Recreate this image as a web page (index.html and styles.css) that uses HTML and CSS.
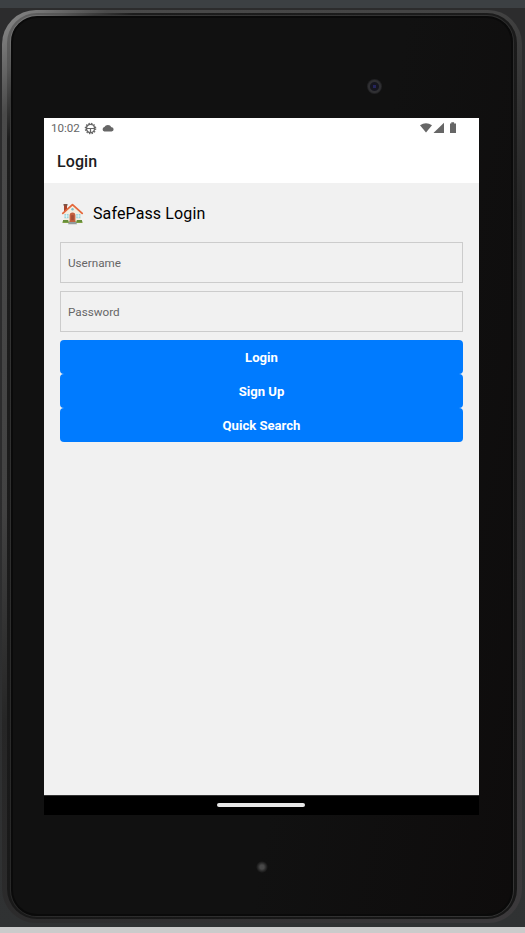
FILE: index.html
```html
<!DOCTYPE html>
<html lang="en">
<head>
<meta charset="utf-8">
<title>SafePass Login</title>
<link rel="stylesheet" href="styles.css">
</head>
<body>
<div class="stage">
  <div class="rim"><div class="groove"><div class="ridge"><div class="device">
    <span class="camera"></span>
    <main class="screen">
      <header class="header">
        <div class="status">
          <span class="clock">10:02</span>
          <svg class="gear" width="13" height="13" viewBox="0 0 13 13" fill="none" stroke="#666">
            <circle cx="6.5" cy="6.5" r="4.1" stroke-width="1.4"/>
            <circle cx="6.5" cy="6.5" r="5.2" stroke-width="1.2" stroke-dasharray="1.4 1.32"/>
            <path d="M2.3 6.5h8.4M6.5 6.5v4.2" stroke-width="1.2"/>
          </svg>
          <svg class="cloud" width="12" height="8" viewBox="0 0 12 8" fill="#666"><path d="M2.3 7.4a2.2 2.2 0 0 1 .1-4.3A3.9 3.9 0 0 1 9.4 3.2a2.1 2.1 0 0 1 .2 4.2z"/></svg>
          <span class="grow"></span>
          <svg width="37" height="12" viewBox="0 0 37 12" fill="#666">
            <path d="M0 3.3Q6 -1 12 3.3L6 10.6z"/>
            <path d="M13.7 11V10.7L24 .8V11z"/>
            <path d="M30 1.4h1.3V.3h2.8v1.1H36V11h-6z"/>
          </svg>
        </div>
        <h1 class="title">Login</h1>
      </header>
      <section class="content">
        <div class="brand">
          <svg width="23" height="22" viewBox="0 0 23 22">
            <path d="M3 2h3v7H3z" fill="#a9442b"/><path d="M2.5 1h4v1.6h-4z" fill="#795548"/>
            <path d="M3 9.5 11.5 2 20 9.5V19H3z" fill="#f4eee0"/>
            <path d="M1.5 18.4h20v1.6h-20z" fill="#7f9f42"/><path d="M2 17h5.3v2H2zM15.7 17H21v2h-5.3z" fill="#668e3b"/>
            <path d="M3.4 11h4.2v4.2H3.4zM15.2 11h4.2v4.2h-4.2z" fill="#9bd4dc"/>
            <path d="M5.5 11v4.2M17.3 11v4.2M3.4 13h4.2M15.2 13h4.2" stroke="#fff" stroke-width=".6"/>
            <path d="M8.6 19v-6.5a2.9 2.9 0 0 1 5.8 0V19z" fill="#c4603f"/>
            <path d="M10.2 12.2h2.6v5h-2.6z" fill="#a44c34"/>
            <path d="M8 19h7l1 2.2H7z" fill="#929a9c"/>
            <path d="M1.8 10.4 11.5 1.6l9.7 8.8" fill="none" stroke="#e4683c" stroke-width="1.8" stroke-linecap="round" stroke-linejoin="round"/>
            <circle cx="11.5" cy="6.2" r="1.2" fill="#7dbdc8"/>
          </svg>
          <span class="brand-name">SafePass Login</span>
        </div>
        <div class="field">Username</div>
        <div class="field">Password</div>
        <div class="actions">
          <div class="button">Login</div>
          <div class="button">Sign Up</div>
          <div class="button">Quick Search</div>
        </div>
      </section>
      <footer class="navbar"><span class="handle"></span></footer>
    </main>
    <span class="mic"></span>
  </div></div></div></div>
</div>
</body>
</html>
```
FILE: styles.css
```css
* { box-sizing: border-box; }
body { margin: 0; font-family: Roboto, sans-serif; background: #2d2f30; }
.stage {
  width: 525px; height: 933px; padding: 10px 3px 10px 2px;
  background: linear-gradient(#3c4043 8px, #2c2c2d 8px, #2c2c2d 50%, #303233 927px, #cbcbcb 927px);
}
.rim {
  height: 913px; border-radius: 34px; padding: 3px 5px 4px;
  background: linear-gradient(135deg, #8c8c8c 0, #777 25px, #4a4a4a 75px, #424242 35%, #262626 50%, #3c3a3c 100%);
}
.groove { height: 100%; border-radius: 30px; padding: 2px 3px; background: linear-gradient(135deg, #656565 0, #555 40px, #1c1c1c 90px, #171717 100%); }
.ridge { height: 100%; border-radius: 27px; padding: 1px; background: linear-gradient(135deg, #888 0, #383838 60px, #282828 60%, #353535 100%); }
.device {
  position: relative; height: 100%; border-radius: 26px; padding: 100px 31px 0;
  border: 2px solid #0a0a0a;
  background: linear-gradient(100deg, #111 0, #111 60%, #0e0c0c 100%);
}
.camera {
  position: absolute; left: 354px; top: 61px; width: 15px; height: 15px; border-radius: 50%;
  background: radial-gradient(circle, #25255c 0 1.5px, #16161f 2px 4px, #303033 5px 6px, #222224 7px);
}
.screen { width: 435px; height: 697px; display: flex; flex-direction: column; background: #f1f1f1; }
.header { height: 65px; background: #fff; }
.status { height: 20px; display: flex; align-items: center; padding: 0 22px 0 7px; }
.clock { font-size: 11.6px; line-height: 20px; color: #666; width: 33px; white-space: nowrap; }
.cloud { margin-left: 5px; }
.grow { flex: 1; }
.title { margin: 14px 0 0 13px; font-size: 16px; line-height: 20px; font-weight: 500; color: #1c1c1e; letter-spacing: .1px; }
.content { flex: 1; padding: 20px 16px 0; }
.brand { display: flex; align-items: center; height: 22px; margin-bottom: 17px; padding-left: 1px; }
.brand-name { margin-left: 9px; font-size: 16px; letter-spacing: .12px; line-height: 22px; color: #000; white-space: nowrap; }
.field {
  height: 41px; margin-bottom: 8px; padding: 0 7px; border: 1px solid #ccc;
  font-size: 11.7px; line-height: 40px; color: #666;
}
.button {
  height: 34px; border-radius: 4px; background: #007bff; color: #fff;
  font-size: 13.1px; line-height: 36px; font-weight: 700; text-align: center;
}
.navbar { height: 20px; background: #000; border-top: 1px solid #333; padding-top: 7px; }
.handle { display: block; width: 88px; height: 4px; margin: 0 0 0 173px; border-radius: 2px; background: #e8e8e8; }
.mic {
  position: absolute; left: 243px; top: 843px; width: 12px; height: 12px; border-radius: 50%;
  background: radial-gradient(circle, #484848 0 2px, #2a2a2a 4px, #111 6px);
}
```
